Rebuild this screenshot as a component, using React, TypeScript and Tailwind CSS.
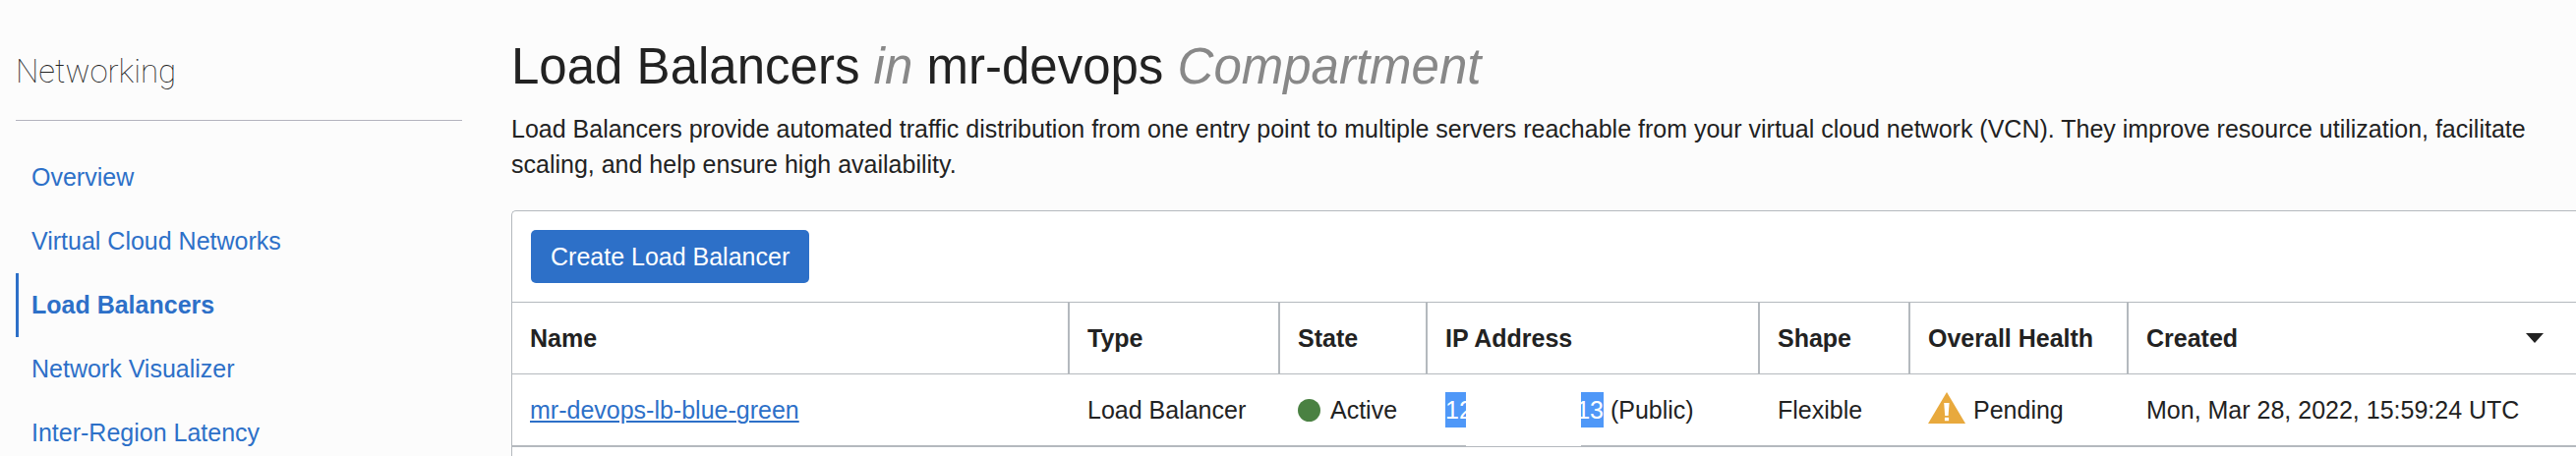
import type { ReactNode } from "react";

const navItems = [
  { label: "Overview", active: false },
  { label: "Virtual Cloud Networks", active: false },
  { label: "Load Balancers", active: true },
  { label: "Network Visualizer", active: false },
  { label: "Inter-Region Latency", active: false },
];

function Sidebar() {
  return (
    <aside className="w-[454px] shrink-0">
      <h2 className="border-b border-[#b4b4be] pt-[49px] pb-[25px] font-[Roboto,sans-serif] text-[33px] leading-[48px] font-thin">
        Networking
      </h2>
      <nav className="pt-[25px]">
        <ul>
          {navItems.map((item) => (
            <li key={item.label}>
              <a
                href="#"
                aria-current={item.active ? "page" : undefined}
                className={
                  item.active
                    ? "block border-l-[3px] border-[#2d70c8] pl-[13px] leading-[65px] font-bold text-[#2d70c8]"
                    : "block border-l-[3px] border-transparent pl-[13px] leading-[65px] text-[#2d70c8]"
                }
              >
                {item.label}
              </a>
            </li>
          ))}
        </ul>
      </nav>
    </aside>
  );
}

function Th({ children, last = false }: { children: ReactNode; last?: boolean }) {
  return (
    <th
      scope="col"
      className={
        last
          ? "h-[74px] border-y border-[#b4b9be] px-[18px] text-left font-bold"
          : "h-[74px] border-y border-r-2 border-[#b4b9be] px-[18px] text-left font-bold"
      }
    >
      {children}
    </th>
  );
}

function Td({ children }: { children: ReactNode }) {
  return (
    <td className="relative h-[74px] border-b-2 border-[#b4b9be] px-[18px]">
      {children}
    </td>
  );
}

function WarningIcon() {
  return (
    <svg viewBox="0 0 38 36" className="h-[36px] w-[38px] shrink-0" aria-hidden="true">
      <path d="M19 0 38 32H0Z" fill="#e8a93d" />
      <path d="M16.2 11h5.4l-1 13h-3.4Z" fill="#fff" />
      <path d="M16.9 25.8h4.2v3.4h-4.2Z" fill="#fff" />
    </svg>
  );
}

function MaskedAddress() {
  return (
    <div className="flex whitespace-pre">
      <span className="w-[21px] bg-[#4f98f8] text-white">12</span>
      <span className="w-[117px]">
        <span className="absolute top-0 -bottom-px w-[117px] bg-white" />
      </span>
      <span className="flex w-[23px] justify-end bg-[#4f98f8] text-white">13</span>
      <span> (Public)</span>
    </div>
  );
}

function LoadBalancerTable() {
  return (
    <table className="w-full table-fixed border-separate border-spacing-0 whitespace-nowrap">
      <colgroup>
        <col />
        <col className="w-[214px]" />
        <col className="w-[150px]" />
        <col className="w-[338px]" />
        <col className="w-[153px]" />
        <col className="w-[222px]" />
        <col className="w-[455px]" />
      </colgroup>
      <thead>
        <tr>
          <Th>Name</Th>
          <Th>Type</Th>
          <Th>State</Th>
          <Th>IP Address</Th>
          <Th>Shape</Th>
          <Th>Overall Health</Th>
          <Th last>
            <div className="flex items-center justify-between pr-[15px]">
              Created
              <button type="button" aria-label="Sort by created">
                <svg viewBox="0 0 18 10" className="h-[10px] w-[18px]" aria-hidden="true">
                  <path d="M0 0H18L9 10Z" fill="#222" />
                </svg>
              </button>
            </div>
          </Th>
        </tr>
      </thead>
      <tbody>
        <tr>
          <Td>
            <a href="#" className="text-[#2d70c8] underline decoration-2 underline-offset-2">
              mr-devops-lb-blue-green
            </a>
          </Td>
          <Td>Load Balancer</Td>
          <Td>
            <div className="flex items-center gap-[10px]">
              <span className="size-[23px] rounded-full bg-[#4a8142]" />
              Active
            </div>
          </Td>
          <Td>
            <MaskedAddress />
          </Td>
          <Td>Flexible</Td>
          <Td>
            <div className="flex items-center gap-[8px]">
              <WarningIcon />
              Pending
            </div>
          </Td>
          <Td>Mon, Mar 28, 2022, 15:59:24 UTC</Td>
        </tr>
      </tbody>
    </table>
  );
}

export default function App() {
  return (
    <div className="flex h-screen gap-[50px] overflow-hidden bg-[#fcfcfc] pl-[16px] font-['Liberation_Sans',Arial,sans-serif] text-[25px] leading-[36px] text-[#222]">
      <Sidebar />
      <main className="flex min-w-0 flex-1 flex-col">
        <h1 className="pt-[38px] text-[51px] leading-[60px]">
          Load Balancers <em className="text-[#888]">in</em> mr-devops{" "}
          <em className="text-[#888]">Compartment</em>
        </h1>
        <p className="pt-[15px] pb-[29px]">
          Load Balancers provide automated traffic distribution from one entry point to multiple
          servers reachable from your virtual cloud network (VCN). They improve resource
          utilization, facilitate scaling, and help ensure high availability.
        </p>
        <section className="grow rounded-tl-[5px] border-t border-l border-[#b4b9be] bg-white">
          <div className="px-[19px] py-[19px]">
            <button
              type="button"
              className="block h-[54px] rounded-[5px] bg-[#2d70c8] px-[20px] text-white"
            >
              Create Load Balancer
            </button>
          </div>
          <LoadBalancerTable />
        </section>
      </main>
    </div>
  );
}
